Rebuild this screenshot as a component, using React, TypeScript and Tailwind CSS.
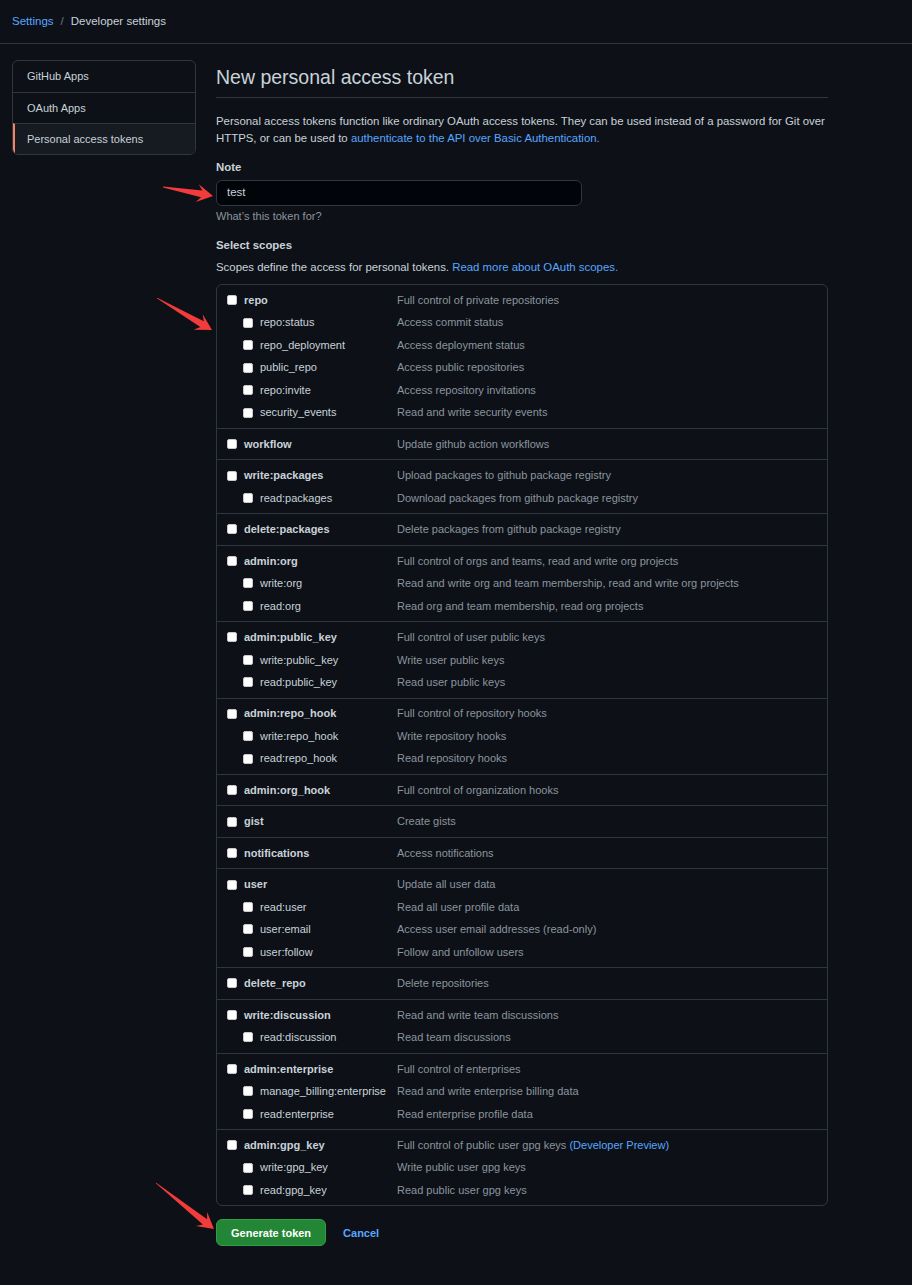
import React from "react";

type Scope = [string, string, boolean?];

const sections: Scope[][] = [
  [
    ["repo", "Full control of private repositories"],
    ["repo:status", "Access commit status"],
    ["repo_deployment", "Access deployment status"],
    ["public_repo", "Access public repositories"],
    ["repo:invite", "Access repository invitations"],
    ["security_events", "Read and write security events"],
  ],
  [["workflow", "Update github action workflows"]],
  [
    ["write:packages", "Upload packages to github package registry"],
    ["read:packages", "Download packages from github package registry"],
  ],
  [["delete:packages", "Delete packages from github package registry"]],
  [
    ["admin:org", "Full control of orgs and teams, read and write org projects"],
    ["write:org", "Read and write org and team membership, read and write org projects"],
    ["read:org", "Read org and team membership, read org projects"],
  ],
  [
    ["admin:public_key", "Full control of user public keys"],
    ["write:public_key", "Write user public keys"],
    ["read:public_key", "Read user public keys"],
  ],
  [
    ["admin:repo_hook", "Full control of repository hooks"],
    ["write:repo_hook", "Write repository hooks"],
    ["read:repo_hook", "Read repository hooks"],
  ],
  [["admin:org_hook", "Full control of organization hooks"]],
  [["gist", "Create gists"]],
  [["notifications", "Access notifications"]],
  [
    ["user", "Update all user data"],
    ["read:user", "Read all user profile data"],
    ["user:email", "Access user email addresses (read-only)"],
    ["user:follow", "Follow and unfollow users"],
  ],
  [["delete_repo", "Delete repositories"]],
  [
    ["write:discussion", "Read and write team discussions"],
    ["read:discussion", "Read team discussions"],
  ],
  [
    ["admin:enterprise", "Full control of enterprises"],
    ["manage_billing:enterprise", "Read and write enterprise billing data"],
    ["read:enterprise", "Read enterprise profile data"],
  ],
  [
    ["admin:gpg_key", "Full control of public user gpg keys", true],
    ["write:gpg_key", "Write public user gpg keys"],
    ["read:gpg_key", "Read public user gpg keys"],
  ],
];

function arrowPoints(tx: number, ty: number, hx: number, hy: number, L = 16, W = 9, w = 3.4) {
  const dx = hx - tx;
  const dy = hy - ty;
  const len = Math.hypot(dx, dy);
  const ux = dx / len;
  const uy = dy / len;
  const nx = -uy;
  const ny = ux;
  const bx = hx - ux * L;
  const by = hy - uy * L;
  const kx = hx - ux * L * 0.72;
  const ky = hy - uy * L * 0.72;
  const pts = [
    [tx + nx * 0.4, ty + ny * 0.4],
    [kx + nx * w, ky + ny * w],
    [bx + nx * W, by + ny * W],
    [hx, hy],
    [bx - nx * W, by - ny * W],
    [kx - nx * w, ky - ny * w],
    [tx - nx * 0.4, ty - ny * 0.4],
  ];
  return pts.map((p) => `${p[0].toFixed(1)},${p[1].toFixed(1)}`).join(" ");
}

function Checkbox() {
  return <span className="inline-block w-[10px] h-[10px] bg-white rounded-[2px] border border-[#c8c8c8] shrink-0" />;
}

function Row({ scope, sub }: { scope: Scope; sub: boolean }) {
  const [name, desc, preview] = scope;
  return (
    <div className="flex items-center h-[22.47px] pl-[10px]">
      <div className={`flex items-center w-[170px] shrink-0 ${sub ? "pl-4" : ""}`}>
        <Checkbox />
        <span className={`ml-[7px] text-[#c9d1d9] ${sub ? "font-normal" : "font-bold"}`}>{name}</span>
      </div>
      <div className="text-[#8b949e] whitespace-nowrap">
        {desc}
        {preview ? <span className="text-[#58a6ff]"> (Developer Preview)</span> : null}
      </div>
    </div>
  );
}

export default function App() {
  return (
    <div className="relative min-h-[1285px] w-full bg-[#0d1117] font-['Liberation_Sans',Arial,sans-serif] text-[11px] text-[#c9d1d9]">
      <div className="h-[44px] border-b border-[#30363d] flex items-center px-3 text-[11.5px]">
        <span className="text-[#58a6ff]">Settings</span>
        <span className="text-[#6e7681] mx-[7px]">/</span>
        <span className="text-[#c9d1d9]">Developer settings</span>
      </div>

      <div className="flex pt-4 pl-3">
        <div className="w-[184px] shrink-0 self-start border border-[#30363d] rounded-md overflow-hidden">
          <div className="h-[31px] flex items-center px-[14px]">GitHub Apps</div>
          <div className="h-[31px] flex items-center px-[14px] border-t border-[#30363d]">OAuth Apps</div>
          <div className="h-[31px] flex items-center pl-[12px] border-t border-[#30363d] bg-[#161b22] border-l-2 border-l-[#f78166]">
            Personal access tokens
          </div>
        </div>

        <div className="ml-[20px] w-[612px]">
          <h2 className="mt-[2px] text-[19.5px] leading-[30px] font-normal pb-[5px] border-b border-[#30363d]">
            New personal access token
          </h2>
          <p className="mt-[15px] leading-[17px] text-[11.4px]">
            Personal access tokens function like ordinary OAuth access tokens. They can be used instead of a password for Git over HTTPS, or can be used to{" "}
            <span className="text-[#58a6ff]">authenticate to the API over Basic Authentication.</span>
          </p>

          <div className="mt-[12px] leading-[17px] font-bold text-[11.4px]">Note</div>
          <div className="mt-[4px] w-[366px] h-[26px] rounded-md border border-[#30363d] bg-[#010409] flex items-center px-[10px] text-[11.4px]">
            test
          </div>
          <div className="mt-[3px] text-[11px] leading-[14px] text-[#8b949e]">What’s this token for?</div>

          <div className="mt-[14px] leading-[17px] font-bold text-[11.4px]">Select scopes</div>
          <div className="mt-[5px] leading-[17px] text-[11.4px]">
            Scopes define the access for personal tokens.{" "}
            <span className="text-[#58a6ff]">Read more about OAuth scopes.</span>
          </div>

          <div className="mt-[8px] border border-[#30363d] rounded-md">
            {sections.map((sec, i) => (
              <div key={i} className={`py-1 ${i > 0 ? "border-t border-[#30363d]" : ""}`}>
                {sec.map((s, j) => (
                  <Row key={s[0]} scope={s} sub={j > 0} />
                ))}
              </div>
            ))}
          </div>

          <div className="mt-[13px] flex items-center">
            <div className="h-[27px] px-[14px] flex items-center rounded-md bg-[#238636] border border-[#2ea043] text-white font-bold">
              Generate token
            </div>
            <div className="ml-[17px] text-[#58a6ff] font-bold">Cancel</div>
          </div>
        </div>
      </div>

      <svg className="absolute inset-0 pointer-events-none" width="912" height="1285" viewBox="0 0 912 1285">
        <polygon points={arrowPoints(163, 187, 213, 196)} fill="#f23b3b" />
        <polygon points={arrowPoints(157, 298, 212, 330)} fill="#f23b3b" />
        <polygon points={arrowPoints(156, 1183, 214, 1229)} fill="#f23b3b" />
      </svg>
    </div>
  );
}
